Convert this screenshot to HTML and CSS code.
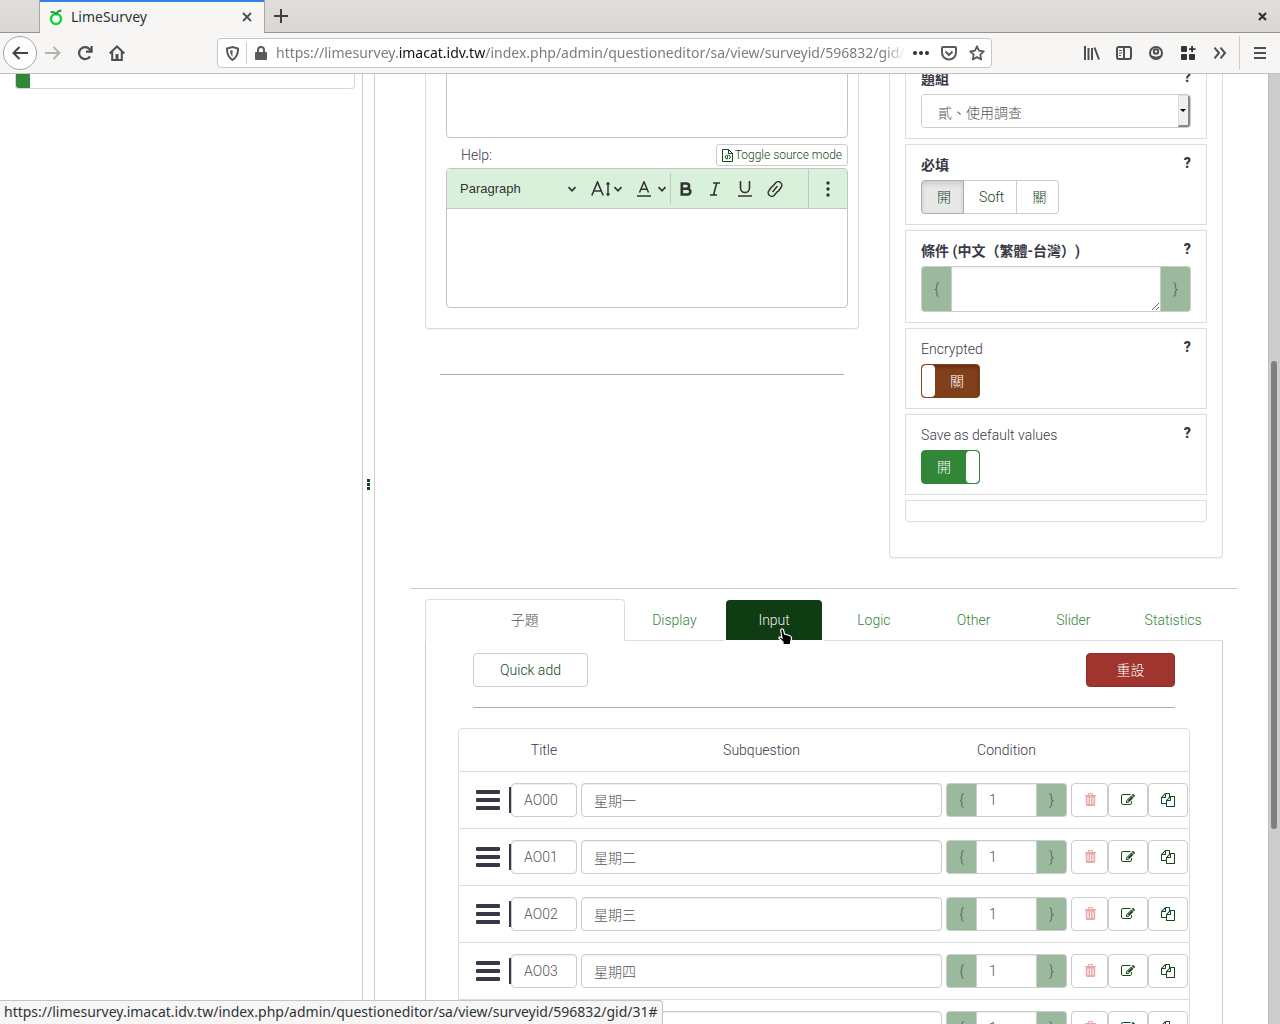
FILE: index.html
```html
<!DOCTYPE html>
<html lang="zh-Hant-TW">
<head>
<meta charset="utf-8">
<title>LimeSurvey</title>
<link rel="stylesheet" href="styles.css">
</head>
<body>
<svg class="sprite" aria-hidden="true">
  <symbol id="trash" viewBox="0 0 14 14"><path fill-rule="evenodd" d="M5 1.2C5.200.4 5.400 0 6 0h3c.6 0 .8.4 1 1.200l.2.8h3v1h-1v8.600c0 .9-.4 1.400-1.200 1.400H4c-.8 0-1.200-.5-1.200-1.400V3h-1V2h3zM6 2h3l-.3-1H6.300zM4.500 4.500v6.500h1V4.500zm2.500 0v6.500h1V4.500zm2.500 0v6.500h1V4.500z"/></symbol>
  <symbol id="edit" viewBox="0 0 1792 1792"><path d="M888 1184l116-116-152-152-116 116v56h96v96h56zm440-720q-16-16-33 1l-350 350q-17 17-1 33t33-1l350-350q17-17 1-33zm80 594v190q0 119-84.500 203.500t-203.500 84.500h-832q-119 0-203.500-84.500t-84.500-203.500v-832q0-119 84.500-203.500t203.500-84.500h832q63 0 117 25 15 7 18 23 3 17-9 29l-49 49q-14 14-32 8-23-6-45-6h-832q-66 0-113 47t-47 113v832q0 66 47 113t113 47h832q66 0 113-47t47-113v-126q0-13 9-22l64-64q15-15 35-7t20 29zm-96-738l288 288-672 672h-288v-288zm444 132l-92 92-288-288 92-92q28-28 68-28t68 28l152 152q28 28 28 68t-28 68z"/></symbol>
  <symbol id="copy" viewBox="0 0 1792 1792"><path d="M1696 384q40 0 68 28t28 68v1216q0 40-28 68t-68 28h-960q-40 0-68-28t-28-68v-288h-544q-40 0-68-28t-28-68v-672q0-40 20-88t48-76l408-408q28-28 76-48t88-20h416q40 0 68 28t28 68v328q68-40 128-40h416zm-544 213l-299 299h299v-299zm-640-384l-299 299h299v-299zm196 647l316-316v-416h-384v416q0 40-28 68t-68 28h-416v640h512v-256q0-40 20-88t48-76zm956 804v-1152h-384v416q0 40-28 68t-68 28h-416v640h896z"/></symbol>
  <symbol id="bars" viewBox="0 0 24 20"><rect width="24" height="4" rx="1"/><rect y="8" width="24" height="4" rx="1"/><rect y="16" width="24" height="4" rx="1"/></symbol>
  <symbol id="chevron" viewBox="0 0 10 10"><path d="M1.500 3.200L5 6.800l3.500-3.600" fill="none" stroke="currentColor" stroke-width="1.700"/></symbol>
</svg>

<header class="browser">
  <div class="tabstrip">
    <div class="browser-tab">
      <svg width="16" height="18" viewBox="0 0 16 18" fill="none"><circle cx="8" cy="11" r="5" stroke="#12d13d" stroke-width="2.400"/><path d="M2.500 4.500q3-1.500 5.500 1.500 2-3.500 5.500-3.500" stroke="#1f9a4c" stroke-width="1.800"/></svg>
      <span class="tab-title">LimeSurvey</span>
      <button class="chrome-btn small" aria-label="Close tab"><svg width="12" height="12" viewBox="0 0 12 12"><path d="M2 2l8 8M10 2l-8 8" stroke="#4a4f52" stroke-width="1.800"/></svg></button>
    </div>
    <button class="chrome-btn" aria-label="New tab"><svg width="14" height="14" viewBox="0 0 14 14"><path d="M7 0v14M0 7h14" stroke="#3c4245" stroke-width="2"/></svg></button>
    <button class="chrome-btn window-close" aria-label="Close window"><svg width="9" height="9" viewBox="0 0 9 9"><path d="M1 1l7 7M8 1L1 8" stroke="#2e3436" stroke-width="2.200"/></svg></button>
  </div>
  <div class="navbar">
    <button class="chrome-btn back" aria-label="Back"><svg width="16" height="14" viewBox="0 0 16 14" fill="none" stroke="#3f4447" stroke-width="2"><path d="M16 7H1.500M7.500 1l-6 6 6 6"/></svg></button>
    <button class="chrome-btn" aria-label="Forward"><svg width="16" height="14" viewBox="0 0 16 14" fill="none" stroke="#b4b3b2" stroke-width="2"><path d="M0 7h14.500M8.500 1l6 6-6 6"/></svg></button>
    <button class="chrome-btn" aria-label="Reload"><svg width="16" height="16" viewBox="0 0 16 16" fill="none" stroke="#4a4f52" stroke-width="2.200"><path d="M13 11.500A6 6 0 1 1 12.500 4L14 6"/><path d="M14.600 1v5.600H9"/></svg></button>
    <button class="chrome-btn" aria-label="Home"><svg width="16" height="16" viewBox="0 0 16 16" fill="none" stroke="#4a4f52" stroke-width="2"><path d="M.7 8.500L8 1.500l7.300 7M3.200 7v8h9.600V7"/><path d="M8 9v6" stroke-width="3"/></svg></button>
    <div class="urlbar">
      <button class="chrome-btn shield" aria-label="Tracking protection"><svg width="13" height="15" viewBox="0 0 13 15"><path d="M6.500 1L12 2.500q.3 8-5.500 11.500Q.7 10.500 1 2.500z" fill="none" stroke="#5a5a5a" stroke-width="2"/><path d="M6.500 4L4 4.800q0 4 2.500 6z" fill="#5a5a5a"/></svg></button>
      <button class="chrome-btn lock" aria-label="Site information"><svg width="12" height="14" viewBox="0 0 12 14"><rect y="6" width="12" height="8" rx="1" fill="#5a5a5a"/><path d="M3 7V4a3 3 0 0 1 6 0v3" fill="none" stroke="#5a5a5a" stroke-width="2"/></svg></button>
      <div class="url" role="textbox" aria-label="Address">https://limesurvey.<b>imacat.idv.tw</b>/index.php/admin/questioneditor/sa/view/surveyid/596832/gid/31</div>
      <button class="chrome-btn url-btn" aria-label="Page actions"><svg width="16" height="4" viewBox="0 0 16 4" fill="#5a5a5a"><circle cx="2" cy="2" r="2"/><circle cx="8" cy="2" r="2"/><circle cx="14" cy="2" r="2"/></svg></button>
      <button class="chrome-btn url-btn" aria-label="Save to Pocket"><svg width="16" height="15" viewBox="0 0 16 15" fill="none" stroke="#5a5a5a" stroke-width="2"><path d="M1 2q0-1 1-1h12q1 0 1 1v4.500a7 7 0 0 1-14 0z"/><path d="M4.500 5.500L8 9l3.500-3.500"/></svg></button>
      <button class="chrome-btn url-btn" aria-label="Bookmark"><svg width="16" height="16" viewBox="0 0 16 16" fill="none" stroke="#5a5a5a" stroke-width="1.800" stroke-linejoin="round"><path d="M8 1.300l2 4.400 4.800.6-3.500 3.300.9 4.900L8 12.100l-4.200 2.400.9-4.900L1.200 6.300 6 5.700z"/></svg></button>
    </div>
    <button class="chrome-btn" aria-label="Library"><svg width="16" height="14" viewBox="0 0 16 14" stroke="#4a4f52" stroke-width="2"><path d="M1 0v14M4.500 2v12M8 2v12M10.500 1.500L15 13.500"/></svg></button>
    <button class="chrome-btn" aria-label="Sidebars"><svg width="16" height="14" viewBox="0 0 16 14" fill="none" stroke="#4a4f52" stroke-width="2"><rect x="1" y="1" width="14" height="12" rx="2"/><path d="M8 1v12"/><path d="M3 4.500h3M3 7h3M3 9.500h2" stroke-width="1"/></svg></button>
    <button class="chrome-btn" aria-label="Account"><svg width="14" height="14" viewBox="0 0 14 14" fill="none" stroke="#4a4f52" stroke-width="2"><circle cx="7" cy="7" r="6"/><circle cx="7" cy="5.500" r="2.200"/><path d="M2.500 10q4.500 2.500 9 0L9 12.500H5z" fill="#4a4f52" stroke-width="1"/></svg></button>
    <button class="chrome-btn" aria-label="Extensions"><svg width="15" height="14" viewBox="0 0 15 14" fill="#2e3033"><rect width="6" height="6" rx="1"/><rect y="8" width="6" height="6" rx="1"/><rect x="8" y="8" width="6" height="6" rx="1"/><path d="M10.200 0h1.800v2.200h2.500V4H12v2.200h-1.800V4H8V2.200h2.200z"/></svg></button>
    <button class="chrome-btn" aria-label="More tools"><svg width="14" height="12" viewBox="0 0 14 12" fill="none" stroke="#4a4f52" stroke-width="2"><path d="M1.500.7L6 6l-4.500 5.300M7.500.7L12 6l-4.500 5.300"/></svg></button>
    <button class="chrome-btn menu" aria-label="Menu"><svg width="12" height="12" viewBox="0 0 12 12" stroke="#4a4f52" stroke-width="2"><path d="M0 1h12M0 6h12M0 11h12"/></svg></button>
  </div>
</header>

<div class="viewport">
  <aside class="sidebar">
    <div class="progress"><div class="progress-fill"></div></div>
  </aside>
  <div class="splitter"><i></i><i></i><i></i></div>

  <main class="main">
    <div class="columns">
      <section>
        <div class="panel editor-panel">
          <div class="editor editor-first" contenteditable="true" role="textbox" aria-label="Question"></div>
          <div class="help-row">
            <span id="help-label">Help:</span>
            <button class="btn source-btn"><svg width="11" height="13" viewBox="0 0 11 13" fill="none" stroke="currentColor"><path d="M.5.5h6l4 4v8H.5zM6.500.5v4h4"/><path d="M4.500 6L3 8l1.500 2M7 6l1.500 2L7 10M6 5.500l-1 5" stroke-width="1"/></svg>Toggle source mode</button>
          </div>
          <div class="editor editor-help">
            <div class="toolbar">
              <button class="tool paragraph"><span>Paragraph</span><svg width="10" height="10"><use href="#chevron"/></svg></button>
              <button class="tool font-size" aria-label="Font size"><svg width="20" height="16" viewBox="0 0 20 16" fill="none" stroke="currentColor" stroke-width="1.600"><path d="M.8 14.500L6.500 1l5.700 13.500M2.800 10h7.400"/><path d="M17 2v12" stroke-width="1.500"/><path d="M14.700 3.500L17 .5l2.300 3zM14.700 12.500l2.300 3 2.300-3z" fill="currentColor" stroke="none"/></svg><svg width="10" height="10"><use href="#chevron"/></svg></button>
              <button class="tool font-color" aria-label="Font color"><svg width="14" height="16" viewBox="0 0 14 16" fill="none" stroke="currentColor" stroke-width="1.500"><path d="M2.500 11.500L7 .8l4.500 10.700M4 8.200h6M0 15h14"/></svg><svg width="10" height="10"><use href="#chevron"/></svg></button>
              <button class="tool icon-tool sep" aria-label="Bold"><svg width="12" height="14" viewBox="0 0 12 14" fill="none" stroke="currentColor" stroke-width="2.600"><path d="M1.800 1.500H6.500a2.600 2.600 0 0 1 0 5.200H1.800zM1.800 6.700H7.500a2.900 2.900 0 0 1 0 5.800H1.800z"/></svg></button>
              <button class="tool icon-tool" aria-label="Italic"><svg width="12" height="14" viewBox="0 0 12 14" fill="none" stroke="currentColor" stroke-width="1.600"><path d="M4 1h7M1 13h7M7.700 1L4.500 13"/></svg></button>
              <button class="tool icon-tool" aria-label="Underline"><svg width="14" height="16" viewBox="0 0 14 16" fill="none" stroke="currentColor" stroke-width="1.600"><path d="M2.500 0v7a4.500 4.500 0 0 0 9 0V0M0 15h14"/></svg></button>
              <button class="tool icon-tool" aria-label="Link"><svg width="16" height="16" viewBox="0 0 16 16" fill="none" stroke="currentColor" stroke-width="1.500" stroke-linecap="round"><path d="M6 10.500l4-5M5.500 5.500l3-3.500a3.500 3.500 0 0 1 5.500 4.500L11.500 10M10.500 10.500l-3 3.500A3.500 3.500 0 0 1 2 9.500L4.500 6"/></svg></button>
              <button class="tool more" aria-label="Show more items"><svg width="4" height="16" viewBox="0 0 4 16" fill="currentColor"><circle cx="2" cy="2" r="1.700"/><circle cx="2" cy="8" r="1.700"/><circle cx="2" cy="14" r="1.700"/></svg></button>
            </div>
            <div class="editor-body" contenteditable="true" role="textbox" aria-labelledby="help-label"></div>
          </div>
        </div>
        <hr class="green-rule left-rule">
      </section>

      <section class="panel settings">
        <div class="card">
          <div class="card-head"><label class="strong" for="group">題組</label><button class="hint" aria-label="說明">?</button></div>
          <div class="select-box">
            <select id="group"><option>貳、使用調查</option></select>
            <span class="select-arrow"></span>
          </div>
        </div>
        <div class="card">
          <div class="card-head"><span class="strong">必填</span><button class="hint" aria-label="說明">?</button></div>
          <div class="radio-group">
            <label class="active"><input type="radio" name="mandatory" checked>開</label>
            <label><input type="radio" name="mandatory">Soft</label>
            <label><input type="radio" name="mandatory">關</label>
          </div>
        </div>
        <div class="card">
          <div class="card-head"><label class="strong" for="relevance">條件 (中文（繁體-台灣）)</label><button class="hint" aria-label="說明">?</button></div>
          <div class="brace-group">
            <span class="brace">{</span><textarea id="relevance" rows="1"></textarea><span class="brace">}</span>
          </div>
        </div>
        <div class="card">
          <div class="card-head"><label for="encrypted">Encrypted</label><button class="hint" aria-label="說明">?</button></div>
          <label class="switch off"><input type="checkbox" id="encrypted"><span>關</span></label>
        </div>
        <div class="card">
          <div class="card-head"><label for="savedefault">Save as default values</label><button class="hint" aria-label="說明">?</button></div>
          <label class="switch on"><span>開</span><input type="checkbox" id="savedefault" checked></label>
        </div>
        <div class="card empty"></div>
      </section>
    </div>

    <hr class="main-rule">

    <div class="advanced">
      <nav class="tabs">
        <a class="tab current" href="#sub">子題</a>
        <a class="tab" href="#display">Display</a>
        <a class="tab hovered" href="#input">Input
          <svg class="cursor" width="16" height="18" viewBox="0 0 16 18"><path d="M4.500 1Q6 .5 6.500 2L7.500 6l5 1.500q2.300.8 2 3.500l-1 3v2.500H6V14L2 10.500Q1.500 8.500 3.500 9L5 10 3.700 2.500Q3.700 1.300 4.500 1z" fill="#000" stroke="#fff" stroke-width="1.200"/></svg>
        </a>
        <a class="tab" href="#logic">Logic</a>
        <a class="tab" href="#other">Other</a>
        <a class="tab" href="#slider">Slider</a>
        <a class="tab" href="#statistics">Statistics</a>
      </nav>
      <div class="tab-body">
        <div class="actions">
          <button class="btn quick-add">Quick add</button>
          <button class="btn reset">重設</button>
        </div>
        <hr class="green-rule actions-rule">
        <div class="table-box">
          <table>
            <colgroup><col class="c-handle"><col class="c-title"><col><col class="c-cond"><col class="c-act"></colgroup>
            <thead><tr><th></th><th>Title</th><th>Subquestion</th><th>Condition</th><th></th></tr></thead>
            <tbody>
              <tr>
                <td class="handle"><svg width="24" height="20"><use href="#bars"/></svg></td>
                <td><div class="title-cell"><input class="field" aria-label="Title" value="AO00"></div></td>
                <td><input class="field" aria-label="Subquestion" value="星期一"></td>
                <td><div class="brace-group"><span class="brace">{</span><input class="field" aria-label="Condition" value="1"><span class="brace">}</span></div></td>
                <td><div class="row-actions"><button class="btn del" aria-label="Delete"><svg width="14" height="14"><use href="#trash"/></svg></button><button class="btn" aria-label="Edit"><svg width="14" height="14"><use href="#edit"/></svg></button><button class="btn" aria-label="Copy"><svg width="14" height="14"><use href="#copy"/></svg></button></div></td>
              </tr>
              <tr>
                <td class="handle"><svg width="24" height="20"><use href="#bars"/></svg></td>
                <td><div class="title-cell"><input class="field" aria-label="Title" value="AO01"></div></td>
                <td><input class="field" aria-label="Subquestion" value="星期二"></td>
                <td><div class="brace-group"><span class="brace">{</span><input class="field" aria-label="Condition" value="1"><span class="brace">}</span></div></td>
                <td><div class="row-actions"><button class="btn del" aria-label="Delete"><svg width="14" height="14"><use href="#trash"/></svg></button><button class="btn" aria-label="Edit"><svg width="14" height="14"><use href="#edit"/></svg></button><button class="btn" aria-label="Copy"><svg width="14" height="14"><use href="#copy"/></svg></button></div></td>
              </tr>
              <tr>
                <td class="handle"><svg width="24" height="20"><use href="#bars"/></svg></td>
                <td><div class="title-cell"><input class="field" aria-label="Title" value="AO02"></div></td>
                <td><input class="field" aria-label="Subquestion" value="星期三"></td>
                <td><div class="brace-group"><span class="brace">{</span><input class="field" aria-label="Condition" value="1"><span class="brace">}</span></div></td>
                <td><div class="row-actions"><button class="btn del" aria-label="Delete"><svg width="14" height="14"><use href="#trash"/></svg></button><button class="btn" aria-label="Edit"><svg width="14" height="14"><use href="#edit"/></svg></button><button class="btn" aria-label="Copy"><svg width="14" height="14"><use href="#copy"/></svg></button></div></td>
              </tr>
              <tr>
                <td class="handle"><svg width="24" height="20"><use href="#bars"/></svg></td>
                <td><div class="title-cell"><input class="field" aria-label="Title" value="AO03"></div></td>
                <td><input class="field" aria-label="Subquestion" value="星期四"></td>
                <td><div class="brace-group"><span class="brace">{</span><input class="field" aria-label="Condition" value="1"><span class="brace">}</span></div></td>
                <td><div class="row-actions"><button class="btn del" aria-label="Delete"><svg width="14" height="14"><use href="#trash"/></svg></button><button class="btn" aria-label="Edit"><svg width="14" height="14"><use href="#edit"/></svg></button><button class="btn" aria-label="Copy"><svg width="14" height="14"><use href="#copy"/></svg></button></div></td>
              </tr>
              <tr>
                <td class="handle"><svg width="24" height="20"><use href="#bars"/></svg></td>
                <td><div class="title-cell"><input class="field" aria-label="Title"></div></td>
                <td><input class="field" aria-label="Subquestion"></td>
                <td><div class="brace-group"><span class="brace">{</span><input class="field" aria-label="Condition" value="1"><span class="brace">}</span></div></td>
                <td><div class="row-actions"><button class="btn del" aria-label="Delete"><svg width="14" height="14"><use href="#trash"/></svg></button><button class="btn" aria-label="Edit"><svg width="14" height="14"><use href="#edit"/></svg></button><button class="btn" aria-label="Copy"><svg width="14" height="14"><use href="#copy"/></svg></button></div></td>
              </tr>
            </tbody>
          </table>
        </div>
      </div>
    </div>
  </main>
  <div class="scrollbar"><div class="thumb"></div></div>
</div>
<div class="status">https://limesurvey.imacat.idv.tw/index.php/admin/questioneditor/sa/view/surveyid/596832/gid/31#</div>
</body>
</html>
```
FILE: styles.css
```css
* { box-sizing: border-box; }

body {
  margin: 0;
  height: 100vh;
  display: flex;
  flex-direction: column;
  overflow: hidden;
  background: #fff;
  color: #3a3846;
  font: 300 14px/20px Roboto, "Noto Sans CJK TC", sans-serif;
}

button, input, select, textarea { font: inherit; color: inherit; margin: 0; }
button { cursor: pointer; }
hr { margin: 0; border: 0; height: 1px; background: #ccc; }
svg { display: block; flex: none; fill: currentColor; }
svg[fill="none"] { fill: none; }
.sprite { width: 0; height: 0; position: absolute; }

/* Browser frame */
.browser { flex: none; font: 400 14px/20px "Noto Sans", sans-serif; color: #2e3436; }
.tabstrip {
  display: flex;
  align-items: stretch;
  height: 33px;
  padding-left: 39px;
  background: linear-gradient(#e2dedb, #dad6d2);
  border-bottom: 1px solid #96938f;
}
.browser-tab {
  display: flex;
  align-items: center;
  width: 226px;
  height: 33px;
  padding: 0 7px 0 8px;
  gap: 7px;
  background: #f7f6f5;
  border: solid #a9a6a2;
  border-width: 0 1px;
  box-shadow: inset 0 2px #3584e4;
}
.tab-title { flex: 1; }
.chrome-btn {
  display: flex;
  align-items: center;
  justify-content: center;
  flex: none;
  width: 32px;
  padding: 0;
  border: 0;
  background: none;
}
.chrome-btn.small { width: 20px; }
.window-close { margin-left: auto; margin-right: 2px; }
.navbar {
  display: flex;
  align-items: center;
  height: 41px;
  padding-left: 3px;
  background: #f7f6f5;
  border-bottom: 1px solid #c5c2be;
}
.navbar > .chrome-btn { height: 34px; }
.navbar > .back { border: 1px solid #a9a6a2; border-radius: 50%; background: #fdfdfd; width: 34px; }
.urlbar {
  display: flex;
  align-items: center;
  flex: 1;
  min-width: 0;
  height: 30px;
  margin: 0 84px;
  background: #fff;
  border: 1px solid #cbc5c0;
  border-radius: 4px;
}
.urlbar .shield { width: 29px; height: 22px; border-right: 1px solid #d0ccc9; }
.urlbar .lock { width: 28px; }
.urlbar .url-btn { width: 28px; }
.url {
  flex: 1;
  min-width: 0;
  overflow: hidden;
  white-space: nowrap;
  color: #7c7c7c;
  padding-left: 1px;
  -webkit-mask-image: linear-gradient(to left, transparent, #000 24px);
  mask-image: linear-gradient(to left, transparent, #000 24px);
}
.url b { font-weight: 400; color: #111; }
.navbar > .menu { width: 41px; margin-left: 3px; border-left: 1px solid #d0ccc9; }

/* Page viewport */
.viewport { flex: 1; min-height: 0; display: flex; overflow: hidden; }
.sidebar { flex: none; width: 363px; padding: 0 7px 0 15px; border-right: 1px solid #ccc; }
.progress {
  height: 15px;
  overflow: hidden;
  border: 1px solid #d5d5d5;
  border-top: 0;
  border-radius: 0 0 4px 4px;
}
.progress-fill { width: 4%; height: 100%; background: #328637; }
.splitter {
  flex: none;
  width: 12px;
  display: flex;
  flex-direction: column;
  align-items: center;
  gap: 1px;
  padding-top: 405px;
  border-right: 1px solid #ccc;
}
.splitter i { width: 3px; height: 3px; background: #14471a; }
.main { flex: 1; min-width: 0; padding: 0 30px 0 35px; margin-top: -16px; }
.scrollbar {
  flex: none;
  width: 12px;
  display: grid;
  grid-template-rows: 287fr 468fr 195fr;
  padding: 0 3px 0 2px;
  background: #cdcdcd;
  border-left: 1px solid #c4beb6;
}
.thumb { grid-row: 2; background: #7e8181; border-radius: 3px; }

/* Panels */
.columns {
  display: grid;
  grid-template-columns: 13fr 10fr;
  gap: 30px;
  padding: 0 15px;
}
.panel {
  border: 1px solid #ddd;
  border-top: 0;
  border-radius: 0 0 4px 4px;
  box-shadow: 0 1px 1px rgba(0, 0, 0, .05);
}
.editor-panel { padding: 0 10px 20px 20px; }
.editor { border: 1px solid #c4c4c4; border-radius: 4px; overflow: hidden; }
.editor-first { height: 80px; }
.help-row { display: flex; align-items: center; justify-content: space-between; height: 30px; padding: 4px 0 0 15px; }
.btn {
  display: flex;
  align-items: center;
  justify-content: center;
  height: 34px;
  padding: 0 12px;
  background: #fff;
  color: #14471a;
  border: 1px solid #ccc;
  border-radius: 4px;
}
.source-btn { height: 22px; padding: 0 5px; gap: 2px; font-size: 12px; border-radius: 3px; }
.toolbar {
  display: flex;
  align-items: center;
  height: 40px;
  background: #d9f1da;
  border-bottom: 1px solid #c4c4c4;
  color: #333;
}
.tool {
  display: flex;
  align-items: center;
  justify-content: center;
  flex: none;
  height: 31px;
  padding: 0;
  background: none;
  border: 0;
}
.paragraph {
  flex: 0 1 133px;
  justify-content: space-between;
  padding: 0 3px 0 13px;
  font: 400 13px/20px "Liberation Sans", sans-serif;
}
.font-size { width: 54px; gap: 2px; }
.font-color { width: 36px; gap: 6px; }
.icon-tool { width: 30px; }
.sep { border-left: 1px solid #c4c4c4; }
.more { width: 39px; height: 100%; margin-left: auto; border-left: 1px solid #c4c4c4; }
.editor-body { height: 98px; }
.green-rule { background: #9bb99c; }
.left-rule { margin: 45px 15px 0; }

/* Question settings */
.settings { display: flex; flex-direction: column; gap: 5px; padding: 0 15px 35px; }
.card { border: 1px solid #ddd; padding: 10px 15px; }
.empty { height: 22px; padding: 0; border-radius: 0 0 4px 4px; }
.card-head { display: flex; justify-content: space-between; height: 20px; margin-bottom: 5px; }
.strong { font-weight: 700; text-spacing-trim: space-all; }
.hint { padding: 0; border: 0; background: none; font-weight: 900; font-size: 14px; line-height: 16px; height: 16px; }
.select-box {
  display: flex;
  height: 34px;
  border: 1px solid #ccc;
  border-radius: 4px;
  overflow: hidden;
}
.select-box select { flex: 1; min-width: 0; appearance: none; border: 0; background: #fff; padding: 4px 16px 0; color: #555; }
.select-arrow {
  display: flex;
  align-items: center;
  justify-content: center;
  width: 12px;
  background: #efefef;
  border: 1px solid #ddd;
  border-right: 2px solid #888;
  border-bottom: 2px solid #888;
}
.select-arrow::before { content: ""; border: 3px solid transparent; border-top-color: #000; border-bottom: 0; }
.radio-group { display: flex; color: #14471a; }
.radio-group label {
  display: flex;
  align-items: center;
  height: 34px;
  padding: 0 12px;
  border: 1px solid #ccc;
  border-left-width: 0;
}
.radio-group label:first-child { border-left-width: 1px; border-radius: 4px 0 0 4px; }
.radio-group label:last-child { border-radius: 0 4px 4px 0; }
.radio-group .active { background: #e8e8e8; border-color: #adadad; box-shadow: inset 0 3px 5px rgba(0, 0, 0, .125); }
.radio-group input { appearance: none; width: 3px; height: 13px; }

.brace-group { display: flex; }
.brace {
  display: flex;
  align-items: center;
  justify-content: center;
  flex: none;
  width: 30px;
  background: #9bb99c;
  border: 1px solid #ccc;
  color: #555;
}
.brace:first-child { border-right: 0; border-radius: 4px 0 0 4px; }
.brace:last-child { border-left: 0; border-radius: 0 4px 4px 0; }
.brace-group textarea { flex: 1; min-width: 0; height: 46px; padding: 6px 12px; border: 1px solid #ccc; background: #fff; box-shadow: inset 0 1px 1px rgba(0, 0, 0, .075); }

.switch { display: flex; width: 59px; height: 34px; border-radius: 4px; overflow: hidden; color: #fff; }
.switch span { flex: 1; display: flex; align-items: center; justify-content: center; }
.switch input { appearance: none; width: 13px; background: #fff; border-radius: 4px; }
.switch.off { background: #80401c; border: 1px solid #8a4314; box-shadow: inset 0 2px 4px rgba(0, 0, 0, .3); }
.switch.on { background: #328637; border: 1px solid #328637; }

/* Advanced options */
.main-rule { margin-top: 30px; }
.advanced { padding: 10px 15px 0; }
.tabs { display: grid; grid-template-columns: 2fr repeat(6, 1fr); }
.tab {
  display: flex;
  align-items: center;
  justify-content: center;
  height: 42px;
  border-bottom: 1px solid #ddd;
  color: #328637;
  text-decoration: none;
}
.current { color: #555; border: 1px solid #ddd; border-bottom-color: transparent; border-radius: 4px 4px 0 0; }
.hovered { position: relative; margin: 1px 2px 0; height: 40px; background: #103c14; border: 0; color: #eee; border-radius: 4px 4px 0 0; }
.cursor { position: absolute; left: 50%; top: 28px; margin-left: 3px; }
.tab-body { border: solid #ccc; border-width: 0 1px; padding: 12px 32px 40px; }
.actions { display: flex; justify-content: space-between; padding: 0 15px; }
.quick-add { min-width: 115px; }
.reset { min-width: 89px; background: #a0342e; border-color: #8e2e29; color: #fff; }
.actions-rule { margin: 20px 15px; }
.table-box { border: 1px solid #ddd; border-radius: 4px; }
table { width: 100%; table-layout: fixed; border-collapse: separate; border-spacing: 0; }
.c-handle { width: 50px; }
.c-title { width: 70px; }
.c-cond { width: 125px; }
.c-act { width: 120px; }
th { height: 42px; padding: 0 2px; font-weight: 300; text-align: center; }
td { height: 57px; padding: 0 2px; border-top: 1px solid #ddd; vertical-align: middle; }
td.handle { padding-left: 17px; }
.title-cell { display: flex; align-items: center; margin-left: -2px; }
.title-cell::before { content: ""; flex: none; width: 2px; height: 26px; background: #3a3846; }
.field {
  display: block;
  width: 100%;
  min-width: 0;
  height: 34px;
  padding: 6px 12px;
  border: 1px solid #ccc;
  border-radius: 4px;
  background: #fff;
  color: #555;
  box-shadow: inset 0 1px 1px rgba(0, 0, 0, .075);
}
.brace-group .field { flex: 1; border-radius: 0; }
.row-actions { display: flex; }
.row-actions .btn { width: 40px; flex: none; padding: 0; }
.row-actions .del { width: 37px; color: #e8a9a8; }

/* Link target shown over the page while hovering */
.status {
  position: fixed;
  left: 0;
  bottom: 0;
  height: 24px;
  padding: 0 4px;
  background: #f7f6f5;
  border: 1px solid #c9c3bb;
  border-width: 1px 1px 0 0;
  border-top-right-radius: 4px;
  font: 400 14px/22px "Noto Sans", sans-serif;
  color: #2e3436;
}
```
